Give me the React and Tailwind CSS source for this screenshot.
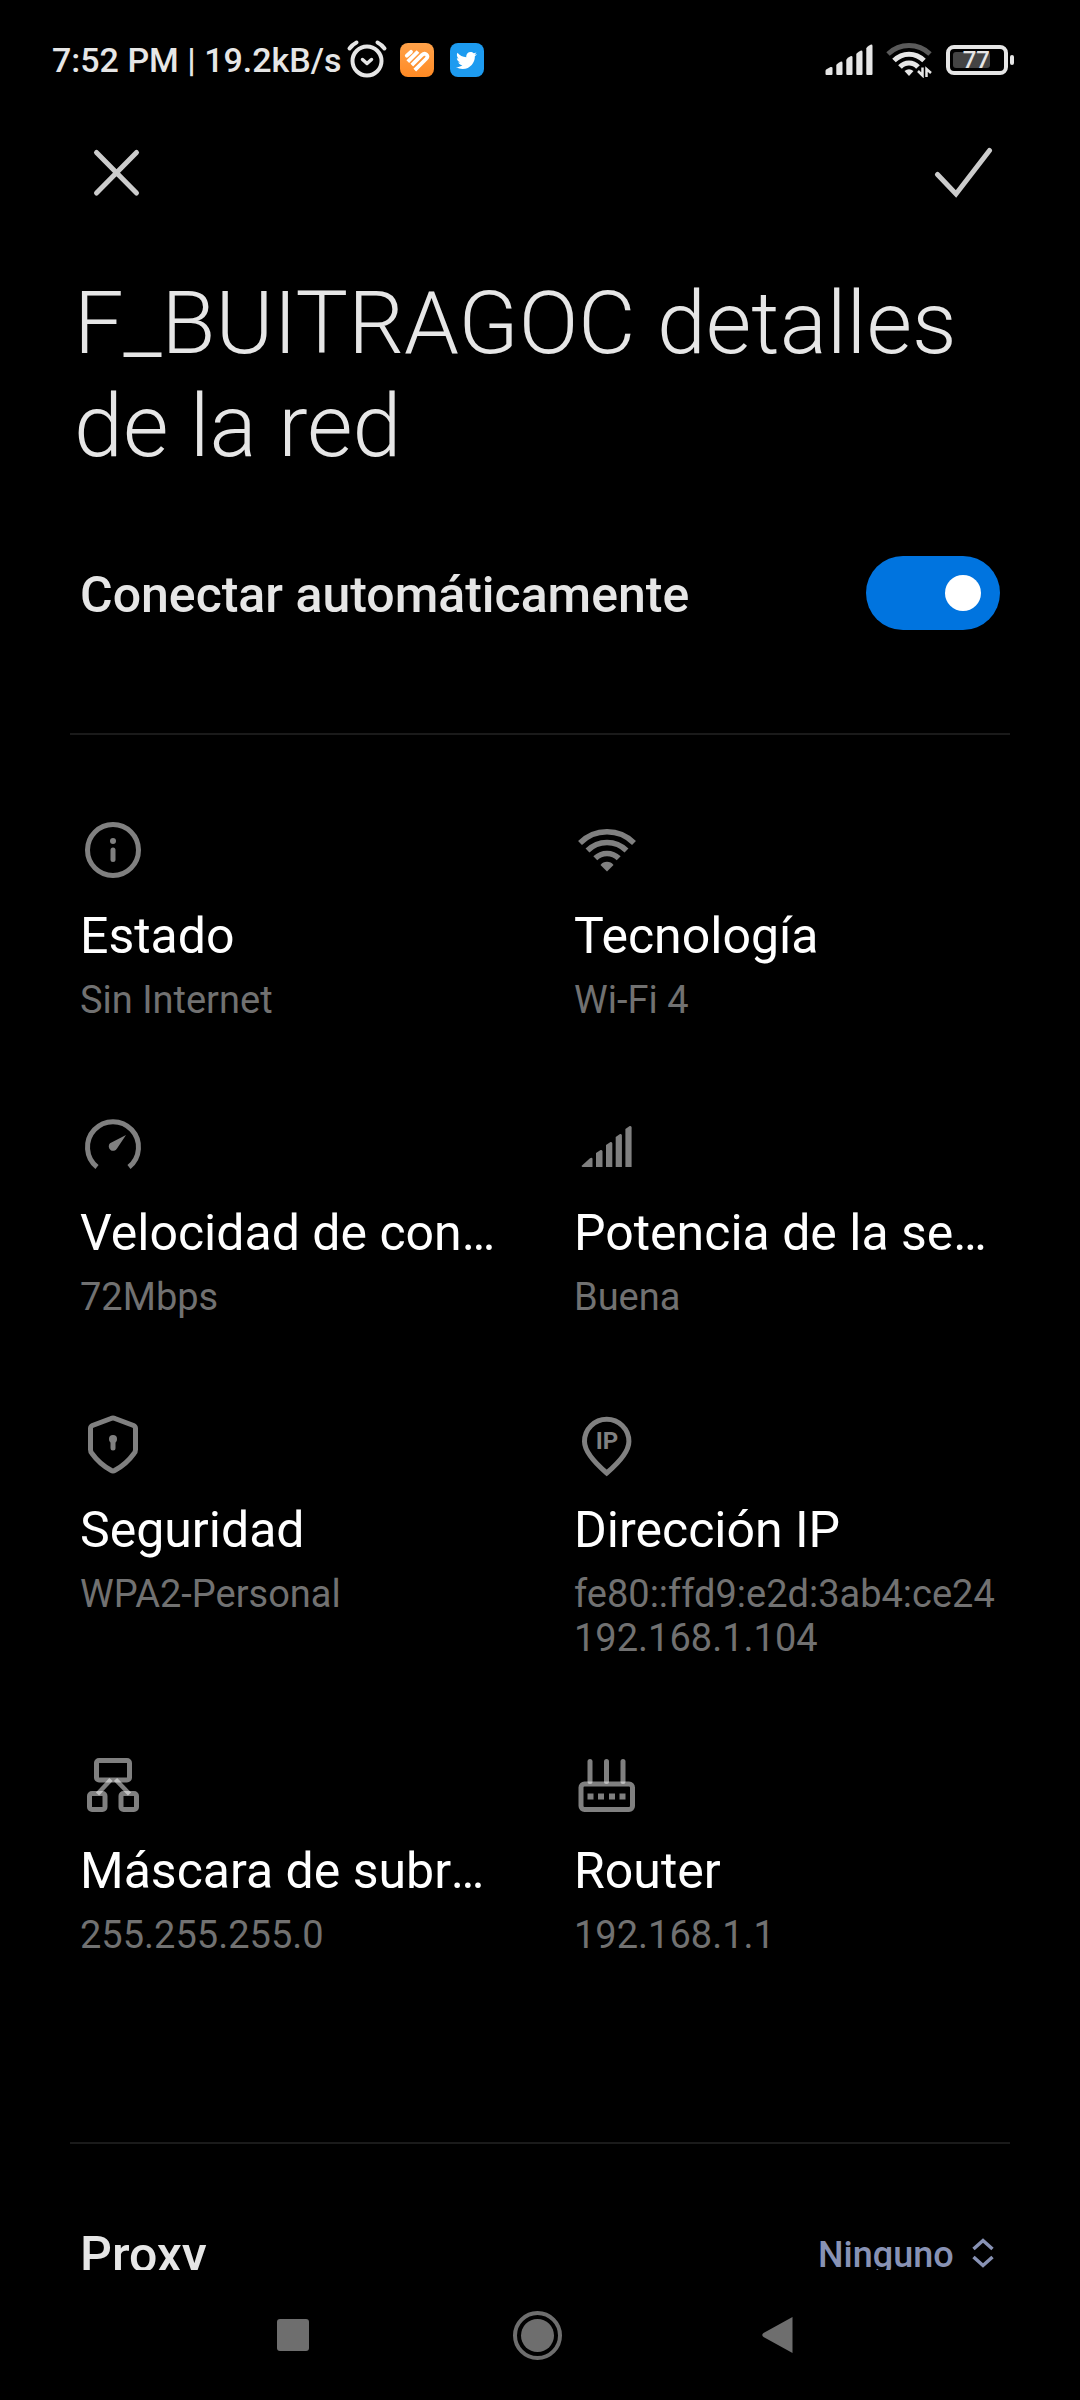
import { useState } from "react";
import { FaTwitter } from "react-icons/fa";

const line = { fill: "none", stroke: "#808080", strokeWidth: 5 };

function IconBox({ children }) {
  return (
    <svg viewBox="0 0 66 66" className="size-[66px]" aria-hidden="true">
      {children}
    </svg>
  );
}

const InfoIcon = () => (
  <IconBox>
    <circle cx="33" cy="33" r="25.5" {...line} />
    <circle cx="33" cy="24" r="3" fill="#808080" />
    <path d="M33 33V42.5" {...line} strokeLinecap="round" />
  </IconBox>
);

const WifiIcon = () => (
  <IconBox>
    <g {...line} strokeWidth="5.5">
      <path d="M6 26A38 38 0 0 1 60 26" />
      <path d="M13.5 33.5A27.5 27.5 0 0 1 52.5 33.5" />
      <path d="M21.3 41.3A16.5 16.5 0 0 1 44.7 41.3" />
    </g>
    <path d="M26.5 48C29.5 43.8 36.5 43.8 39.5 48L33 54.5Z" fill="#808080" />
  </IconBox>
);

const SpeedIcon = () => (
  <IconBox>
    <path d="M17 53A25.5 25.5 0 1 1 49 53" {...line} />
    <path d="M46 21L37 34.5A4.4 4.4 0 1 1 30 29.3Z" fill="#808080" />
  </IconBox>
);

const SignalIcon = () => (
  <IconBox>
    <g fill="#808080">
      <path d="M8 51.5L16 44.2Q18.5 43 18.5 45V53H8.8Q7 53 8 51.5Z" />
      <path d="M22 39L26.6 36Q28.5 35.5 28.5 37.5V53H22Z" />
      <path d="M32 31L36.5 28Q38.3 27.5 38.3 29.5V53H32Z" />
      <path d="M41.7 23L46 20Q47.9 19.5 47.9 21.5V53H41.7Z" />
      <path d="M51.4 15L55.7 12Q57.6 11.5 57.6 13.5V53H51.4Z" />
    </g>
  </IconBox>
);

const ShieldIcon = () => (
  <IconBox>
    <path
      d="M31 7.5Q33 6.5 35 7.5L53.5 14.5Q55.5 15.5 55.5 17.5V38.5Q55.5 41 54 42.5Q46.5 53 35 59.3Q33 60.5 31 59.3Q19.5 53 12 42.5Q10.5 41 10.5 38.5V17.5Q10.5 15.5 12.5 14.5Z"
      {...line}
    />
    <circle cx="33" cy="28" r="4" fill="#808080" />
    <path d="M33 29V37" {...line} strokeLinecap="round" />
  </IconBox>
);

const PinIcon = () => (
  <IconBox>
    <path
      d="M32.7 62C24 54.5 10.5 42 10.5 30.5A22.2 22.2 0 0 1 54.9 30.5C54.9 42 41.5 54.5 32.7 62Z"
      {...line}
    />
    <text x="33" y="38" textAnchor="middle" fontSize="24" fontWeight="700" fill="#808080">
      IP
    </text>
  </IconBox>
);

const SubnetIcon = () => (
  <IconBox>
    <g fill="none" stroke="#ffffff" strokeOpacity="0.5" strokeWidth="5">
      <rect x="16.5" y="8.5" width="33" height="19.5" rx="2.5" />
      <rect x="9.5" y="41.5" width="15.5" height="16" rx="2.5" />
      <rect x="41" y="41.5" width="15.5" height="16" rx="2.5" />
      <path d="M31 27.5L17.5 42" strokeWidth="4.5" />
      <path d="M35.5 27.5L49.5 42" strokeWidth="4.5" />
    </g>
  </IconBox>
);

const RouterIcon = () => (
  <IconBox>
    <g fill="none" stroke="#ffffff" strokeOpacity="0.5" strokeWidth="5">
      <rect x="7" y="32" width="51.5" height="25.5" rx="3.5" />
      <path d="M16 9.5V29.5" strokeLinecap="round" />
      <path d="M32.5 9.5V29.5" strokeLinecap="round" />
      <path d="M49 9.5V29.5" strokeLinecap="round" />
    </g>
    <path d="M13.5 41.5h6v6h-6zM24 41.5h6v6h-6zM35 41.5h6v6h-6zM45.5 41.5h6v6h-6z" fill="#808080" />
  </IconBox>
);

const details = [
  { Icon: InfoIcon, name: "Estado", values: ["Sin Internet"] },
  { Icon: WifiIcon, name: "Tecnología", values: ["Wi-Fi 4"] },
  { Icon: SpeedIcon, name: "Velocidad de conexión", values: ["72Mbps"] },
  { Icon: SignalIcon, name: "Potencia de la señal", values: ["Buena"] },
  { Icon: ShieldIcon, name: "Seguridad", values: ["WPA2-Personal"] },
  { Icon: PinIcon, name: "Dirección IP", values: ["fe80::ffd9:e2d:3ab4:ce24", "192.168.1.104"] },
  { Icon: SubnetIcon, name: "Máscara de subred", values: ["255.255.255.0"] },
  { Icon: RouterIcon, name: "Router", values: ["192.168.1.1"] },
];

function StatusBar() {
  return (
    <div className="flex h-[120px] shrink-0 items-center justify-between pr-[66px] pl-[52px]">
      <div className="flex items-center">
        <span className="text-[34px] leading-[40px] font-medium whitespace-nowrap">7:52 PM | 19.2kB/s</span>
        <svg viewBox="0 0 42 42" className="ml-1 size-[42px]" aria-label="Alarma">
          <g fill="none" stroke="#e6e6e6" strokeWidth="4" strokeLinecap="round">
            <circle cx="21" cy="22" r="14.5" />
            <path d="M16.5 20.5L21 24.5L25.5 20.5" strokeWidth="3.5" strokeLinejoin="round" />
            <path d="M3.5 9.5Q6.5 5.5 10.5 3.5M38.5 9.5Q35.5 5.5 31.5 3.5" />
          </g>
        </svg>
        <svg viewBox="0 0 34 34" className="ml-3 size-[34px]" aria-label="Mi Health">
          <defs>
            <linearGradient id="health" x1="0" y1="0" x2="0" y2="1">
              <stop offset="0" stopColor="#ffa24a" />
              <stop offset="1" stopColor="#ff8a24" />
            </linearGradient>
          </defs>
          <rect width="34" height="34" rx="8" fill="url(#health)" />
          <g fill="none" stroke="#ffffff" strokeWidth="3.8">
            <path d="M6.8 12.7L11 8.8" strokeLinecap="round" />
            <path d="M7.8 18.7L18 8.5" />
            <path d="M11.8 22.2L21.8 12.2Q24.5 9.5 26.5 11.5Q28.500 13.500 26 16L14.800 27.200" />
          </g>
        </svg>
        <span className="ml-4 flex size-[34px] items-center justify-center rounded-lg bg-[#1d9bf0]">
          <FaTwitter className="size-[21px] text-white" aria-label="Twitter" />
        </span>
      </div>
      <div className="flex items-center">
        <svg viewBox="0 0 50 34" className="h-[34px] w-[50px]" aria-label="Señal móvil">
          <g fill="#e6e6e6">
            <path d="M1.5 28Q1.5 27 2.5 26.2L6.5 24Q8.5 23.5 8.5 25V31Q8.5 32 7.5 32H2.5Q1.5 32 1.5 31Z" />
            <path d="M12.3 22Q12.5 21 16.5 18.7Q18.5 18 18.5 20V31Q18.5 32 17.5 32H13.3Q12.3 32 12.3 31Z" />
            <path d="M22.3 17Q22.5 15.5 26.5 13.2Q28.5 12.5 28.5 14.5V31Q28.5 32 27.5 32H23.3Q22.3 32 22.3 31Z" />
            <path d="M32.3 11Q32.5 10 36.5 7.7Q38.5 7 38.5 9V31Q38.5 32 37.5 32H33.3Q32.3 32 32.3 31Z" />
            <path d="M42.3 5.5Q42.5 4 46.5 1.7Q48.5 1 48.5 3V31Q48.5 32 47.5 32H43.3Q42.3 32 42.3 31Z" />
          </g>
        </svg>
        <svg viewBox="0 0 46 36" className="ml-3 h-9 w-[46px]" aria-label="Wi-Fi">
          <g fill="none" stroke="#e6e6e6" strokeWidth="5">
            <path d="M2 12C14 0.8 32 0.8 44 12" stroke="#5a5a5a" />
            <path d="M8 18.500C16.500 10 29.500 10 38 18.500" />
            <path d="M14 25C19 19.500 27 19.500 32 25" />
          </g>
          <path d="M18.500 29Q23 25.500 27.500 29L23 34Z" fill="#e6e6e6" />
          <g fill="none" stroke="#e6e6e6" strokeWidth="2.500">
            <path d="M36.500 25.500V33.500L32 29" />
            <path d="M40.500 35V27L45 31" />
          </g>
        </svg>
        <div className="ml-3.5 flex items-center gap-0.5">
          <div className="flex h-[30px] w-[62px] items-center rounded-lg border-4 border-[#e6e6e6] px-[3px]">
            <div className="flex h-4 w-[37px] items-center justify-end rounded-[3px] bg-[#444444]">
              <span className="text-[24px] leading-4 font-medium">77</span>
            </div>
          </div>
          <div className="h-[10px] w-1 rounded-sm bg-[#e6e6e6]" />
        </div>
      </div>
    </div>
  );
}

export default function App() {
  const [auto, setAuto] = useState(true);
  return (
    <div className="flex h-screen flex-col overflow-hidden bg-black font-['Roboto',sans-serif] text-[#e6e6e6]">
      <StatusBar />
      <header className="flex h-[106px] shrink-0 items-center justify-between px-[86px]">
        <button type="button" aria-label="Cerrar">
          <svg viewBox="0 0 60 60" className="size-[60px]">
            <path d="M10.5 9.5L50.5 50M50.5 9.5L10.5 50" fill="none" stroke="#cccccc" strokeWidth="5" strokeLinecap="round" />
          </svg>
        </button>
        <button type="button" aria-label="Guardar">
          <svg viewBox="0 0 60 60" className="size-[60px]">
            <path d="M3.5 31.5L22 51L55.500 7.500" fill="none" stroke="#cccccc" strokeWidth="5" strokeLinecap="round" />
          </svg>
        </button>
      </header>
      <main className="flex-1 overflow-hidden px-[70px]">
        <h1 className="mt-[45px] px-1 text-[88px] leading-[103px] font-light">F_BUITRAGOC detalles de la red</h1>
        <label className="mt-[79px] flex h-[74px] items-center justify-between px-2.5">
          <span className="pt-1 text-[50px] leading-[58px] font-medium">Conectar automáticamente</span>
          <input
            type="checkbox"
            role="switch"
            checked={auto}
            onChange={(e) => setAuto(e.target.checked)}
            className="flex h-[74px] w-[134px] appearance-none items-center justify-start rounded-full bg-[#333333] px-[19px] before:size-9 before:rounded-full before:bg-white before:content-[''] checked:justify-end checked:bg-[#0074df]"
          />
        </label>
        <hr className="mt-[103px] border-t-2 border-[#1a1a1a]" />
        <dl className="mt-[82px] grid grid-cols-2 gap-x-[68px] gap-y-[92px] px-2.5">
          {details.map(({ Icon, name, values }) => (
            <div key={name} className="min-w-0 pr-2">
              <Icon />
              <dt className="mt-6 truncate text-[50px] leading-[59px] text-white">{name}</dt>
              <dd className="mt-3 text-[38px] leading-[44px] text-[#717171]">
                {values.map((v) => (
                  <div key={v}>{v}</div>
                ))}
              </dd>
            </div>
          ))}
        </dl>
        <hr className="mt-[185px] border-t-2 border-[#1a1a1a]" />
        <div className="mt-[74px] flex h-[74px] items-center justify-between px-2.5">
          <label htmlFor="proxy" className="text-[50px] leading-[58px] font-medium">
            Proxy
          </label>
          <div className="flex items-center gap-4">
            <select id="proxy" className="appearance-none bg-transparent text-[36px] leading-[44px] font-medium text-[#8892b4]">
              <option>Ninguno</option>
            </select>
            <svg viewBox="0 0 30 34" className="h-[34px] w-[30px]" aria-hidden="true">
              <path d="M3.5 11L13 2.5L22.5 11M3.5 19L13 27.5L22.5 19" fill="none" stroke="#8892b4" strokeWidth="3.5" />
            </svg>
          </div>
        </div>
      </main>
      <nav className="grid h-[130px] shrink-0 grid-cols-3 items-center pr-[174px] pl-[170px]">
        <button type="button" aria-label="Recientes" className="ml-[107px] size-8 rounded-[3px] bg-[#6e6e6e]" />
        <button type="button" aria-label="Inicio" className="mx-auto flex size-[49px] items-center justify-center rounded-full border-4 border-[#6e6e6e]">
          <span className="size-[33px] rounded-full bg-[#6e6e6e]" />
        </button>
        <button type="button" aria-label="Atrás" className="ml-auto mr-[111px]">
          <svg viewBox="0 0 34 38" className="h-[38px] w-[34px]">
            <path d="M31.5 1V37L2.5 21Q0 19 2.5 17Z" fill="#6e6e6e" />
          </svg>
        </button>
      </nav>
    </div>
  );
}
